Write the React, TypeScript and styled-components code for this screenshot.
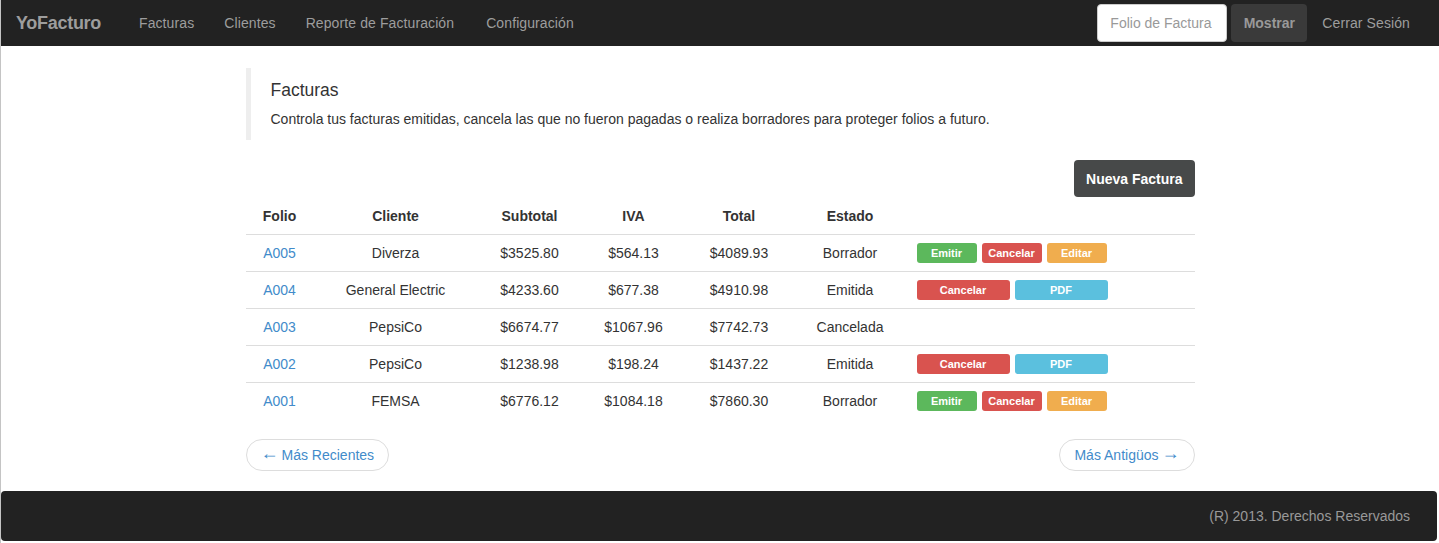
import React from "react";
import styled, { createGlobalStyle } from "styled-components";

const Global = createGlobalStyle`
  html, body { margin: 0; padding: 0; background: #fff; }
  body {
    font-family: "Liberation Sans", Arial, sans-serif;
    font-size: 14px;
    line-height: 20px;
    color: #333;
  }
  * { box-sizing: border-box; }
`;

const Page = styled.div`
  border-left: 1px solid #c4c4c4;
  min-height: 543px;
`;

const Navbar = styled.nav`
  height: 46px;
  background: #222;
  display: flex;
  align-items: center;
  padding: 0 14px 0 0;
`;

const Brand = styled.a`
  font-size: 18px;
  font-weight: bold;
  color: #9d9d9d;
  padding: 0 23px 1px 15px;
  letter-spacing: -0.3px;
`;

const NavLink = styled.a`
  color: #9d9d9d;
  padding: 0 15px 1px;
  letter-spacing: 0.1px;
  text-decoration: none;
`;

const WideNavLink = styled(NavLink)`
  padding-right: 17px;
`;

const Spacer = styled.div`
  flex: 1;
`;

const SearchForm = styled.form`
  display: flex;
  gap: 4px;
  align-items: center;
  margin-right: 1px;
`;

const SearchInput = styled.input`
  width: 130px;
  height: 38px;
  border: 1px solid #ccc;
  border-radius: 4px;
  padding: 0 12px;
  font-family: inherit;
  font-size: 14px;
  color: #555;
  background: #fff;
  &::placeholder { color: #999; }
`;

const ShowButton = styled.button`
  width: 76px;
  height: 38px;
  border: none;
  border-radius: 4px;
  background: #3a3a3a;
  color: #999;
  font-family: inherit;
  font-weight: bold;
  font-size: 14px;
  padding: 0;
`;

const LogoutLink = styled(NavLink)`
  padding-left: 14px;
`;

const Container = styled.main`
  width: 949px;
  margin: 0 auto;
  padding-top: 22px;
`;

const Quote = styled.blockquote`
  margin: 0 0 20px;
  padding: 10px 20px;
  border-left: 5px solid #eee;
`;

const QuoteTitle = styled.h4`
  margin: 0 0 7px;
  font-size: 17.5px;
  line-height: 24px;
  font-weight: normal;
  color: #333;
`;

const QuoteText = styled.p`
  margin: 0;
  padding-bottom: 1px;
`;

const Toolbar = styled.div`
  display: flex;
  justify-content: flex-end;
`;

const PrimaryButton = styled.button`
  height: 37px;
  padding: 0 12px;
  border: none;
  border-radius: 4px;
  background: #474949;
  color: #fff;
  font-family: inherit;
  font-size: 14px;
  font-weight: bold;
`;

const Table = styled.table`
  width: 100%;
  border-collapse: collapse;
  table-layout: fixed;
`;

const Th = styled.th<{ $left?: boolean }>`
  height: 37px;
  padding: 2px 0 0;
  text-align: ${(p) => (p.$left ? "left" : "center")};
  font-weight: bold;
  border-bottom: 1px solid #ddd;
`;

const Tr = styled.tr`
  & + & td { border-top: 1px solid #ddd; }
`;

const Td = styled.td<{ $actions?: boolean }>`
  height: 37px;
  padding: ${(p) => (p.$actions ? "0 0 0 9px" : "0")};
  text-align: ${(p) => (p.$actions ? "left" : "center")};
  vertical-align: middle;
`;

const FolioLink = styled.a`
  color: #428bca;
  text-decoration: none;
`;

const Actions = styled.div`
  display: flex;
  gap: 5px;
  padding-top: 1px;
`;

const palette = {
  success: "#5cb85c",
  danger: "#d9534f",
  warning: "#f0ad4e",
  info: "#5bc0de",
};

const SmallButton = styled.button<{ $kind: keyof typeof palette; $wide?: boolean }>`
  width: ${(p) => (p.$wide ? "93px" : "60px")};
  height: 20px;
  border: none;
  border-radius: 3px;
  padding: 0;
  background: ${(p) => palette[p.$kind]};
  color: #fff;
  font-family: inherit;
  font-size: 11px;
  font-weight: bold;
  line-height: 20px;
`;

const Pager = styled.div`
  display: flex;
  justify-content: space-between;
  margin: 20px 0;
`;

const PagerLink = styled.a`
  display: inline-flex;
  align-items: center;
  gap: 3px;
  height: 32px;
  padding: 0 14px;
  border: 1px solid #ddd;
  border-radius: 16px;
  color: #428bca;
  text-decoration: none;
  background: #fff;
`;

const Arrow = styled.span`
  font-family: "Liberation Sans", sans-serif;
  font-size: 18px;
  line-height: 20px;
  transform: translateY(-2px);
`;

const Footer = styled.footer`
  height: 50px;
  margin-right: 2px;
  background: #222;
  border-radius: 4px;
  display: flex;
  align-items: center;
  justify-content: flex-end;
  padding-right: 27px;
  color: #999;
`;

type Row = {
  folio: string;
  cliente: string;
  subtotal: string;
  iva: string;
  total: string;
  estado: "Borrador" | "Emitida" | "Cancelada";
};

const rows: Row[] = [
  { folio: "A005", cliente: "Diverza", subtotal: "$3525.80", iva: "$564.13", total: "$4089.93", estado: "Borrador" },
  { folio: "A004", cliente: "General Electric", subtotal: "$4233.60", iva: "$677.38", total: "$4910.98", estado: "Emitida" },
  { folio: "A003", cliente: "PepsiCo", subtotal: "$6674.77", iva: "$1067.96", total: "$7742.73", estado: "Cancelada" },
  { folio: "A002", cliente: "PepsiCo", subtotal: "$1238.98", iva: "$198.24", total: "$1437.22", estado: "Emitida" },
  { folio: "A001", cliente: "FEMSA", subtotal: "$6776.12", iva: "$1084.18", total: "$7860.30", estado: "Borrador" },
];

function RowActions({ estado }: { estado: Row["estado"] }) {
  if (estado === "Borrador") {
    return (
      <Actions>
        <SmallButton $kind="success">Emitir</SmallButton>
        <SmallButton $kind="danger">Cancelar</SmallButton>
        <SmallButton $kind="warning">Editar</SmallButton>
      </Actions>
    );
  }
  if (estado === "Emitida") {
    return (
      <Actions>
        <SmallButton $kind="danger" $wide>Cancelar</SmallButton>
        <SmallButton $kind="info" $wide>PDF</SmallButton>
      </Actions>
    );
  }
  return null;
}

export default function App() {
  return (
    <Page>
      <Global />
      <Navbar>
        <Brand>YoFacturo</Brand>
        <NavLink>Facturas</NavLink>
        <NavLink>Clientes</NavLink>
        <WideNavLink>Reporte de Facturación</WideNavLink>
        <NavLink>Configuración</NavLink>
        <Spacer />
        <SearchForm onSubmit={(e) => e.preventDefault()}>
          <SearchInput placeholder="Folio de Factura" />
          <ShowButton type="submit">Mostrar</ShowButton>
        </SearchForm>
        <LogoutLink>Cerrar Sesión</LogoutLink>
      </Navbar>
      <Container>
        <Quote>
          <QuoteTitle>Facturas</QuoteTitle>
          <QuoteText>
            Controla tus facturas emitidas, cancela las que no fueron pagadas o realiza borradores para proteger folios a futuro.
          </QuoteText>
        </Quote>
        <Toolbar>
          <PrimaryButton>Nueva Factura</PrimaryButton>
        </Toolbar>
        <Table>
          <colgroup>
            <col style={{ width: 68 }} />
            <col style={{ width: 164 }} />
            <col style={{ width: 104 }} />
            <col style={{ width: 104 }} />
            <col style={{ width: 107 }} />
            <col style={{ width: 115 }} />
            <col />
          </colgroup>
          <thead>
            <tr>
              <Th>Folio</Th>
              <Th>Cliente</Th>
              <Th>Subtotal</Th>
              <Th>IVA</Th>
              <Th>Total</Th>
              <Th>Estado</Th>
              <Th $left></Th>
            </tr>
          </thead>
          <tbody>
            {rows.map((r) => (
              <Tr key={r.folio}>
                <Td><FolioLink>{r.folio}</FolioLink></Td>
                <Td>{r.cliente}</Td>
                <Td>{r.subtotal}</Td>
                <Td>{r.iva}</Td>
                <Td>{r.total}</Td>
                <Td>{r.estado}</Td>
                <Td $actions><RowActions estado={r.estado} /></Td>
              </Tr>
            ))}
          </tbody>
        </Table>
        <Pager>
          <PagerLink><Arrow>←</Arrow>Más Recientes</PagerLink>
          <PagerLink>Más Antigüos<Arrow>→</Arrow></PagerLink>
        </Pager>
      </Container>
      <Footer>(R) 2013. Derechos Reservados</Footer>
    </Page>
  );
}
